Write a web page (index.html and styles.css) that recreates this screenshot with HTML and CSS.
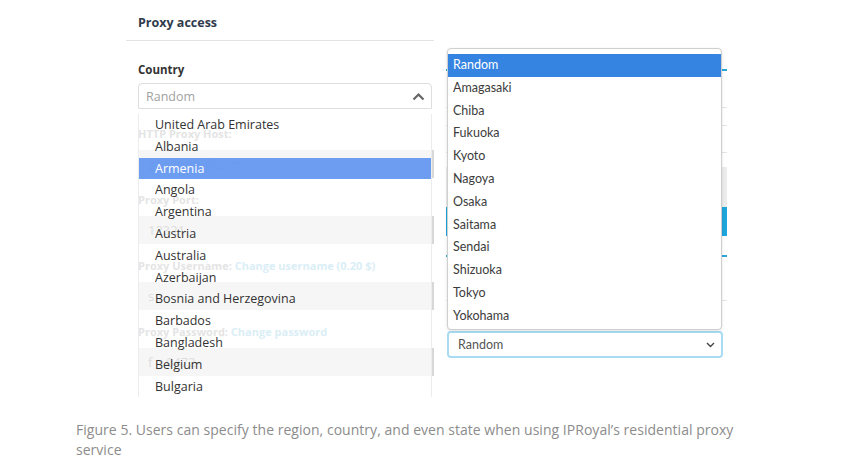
FILE: index.html
```html
<!DOCTYPE html>
<html>
<head>
    <meta charset="UTF-8">
    <title>Proxy access</title>
    <link rel="stylesheet" href="styles.css">
</head>
<body>
    <div class="figure">
        <div class="shot">
            <div class="panel-left">
                <div class="panel-head">Proxy access</div>
                <div class="field-label">Country</div>
                <div class="fake-select open">
                    <span>Random</span>
                    <svg width="13" height="9" viewBox="0 0 13 9"><path d="M1.5 7.5 L6.5 2.5 L11.5 7.5" fill="none" stroke="#666" stroke-width="2.2"/></svg>
                </div>
                <div class="under">
                    <div class="under-label">HTTP Proxy Host:</div>
                    <div class="under-input">geo.iproyal.com</div>
                    <div class="under-label">Proxy Port:</div>
                    <div class="under-input">12321</div>
                    <div class="under-label">Proxy Username: <span class="link">Change username (0.20 $)</span></div>
                    <div class="under-input">s</div>
                    <div class="under-label">Proxy Password: <span class="link">Change password</span></div>
                    <div class="under-input">f&nbsp;&nbsp;&nbsp;&nbsp;0472</div>

                    <ul class="country-list">
                        <li>United Arab Emirates</li>
                        <li>Albania</li>
                        <li class="active">Armenia</li>
                        <li>Angola</li>
                        <li>Argentina</li>
                        <li>Austria</li>
                        <li>Australia</li>
                        <li>Azerbaijan</li>
                        <li>Bosnia and Herzegovina</li>
                        <li>Barbados</li>
                        <li>Bangladesh</li>
                        <li>Belgium</li>
                        <li>Bulgaria</li>
                    </ul>
                </div>
            </div>

            <div class="panel-right">
                <div class="tab-line"></div>
                <div class="rule r1"></div>
                <div class="rule r2"></div>
                <div class="rule r3"></div>
                <div class="grey-block">
                    <div class="cyan-btn"></div>
                </div>
                <div class="tab-line t2"></div>
                <div class="rule r4"></div>
                <div class="city-select">
                    <span>Random</span>
                    <svg width="9" height="6" viewBox="0 0 9 6"><path d="M1 1 L4.5 4.5 L8 1" fill="none" stroke="#444" stroke-width="1.4"/></svg>
                </div>

                <ul class="city-list">
                    <li class="active">Random</li>
                    <li>Amagasaki</li>
                    <li>Chiba</li>
                    <li>Fukuoka</li>
                    <li>Kyoto</li>
                    <li>Nagoya</li>
                    <li>Osaka</li>
                    <li>Saitama</li>
                    <li>Sendai</li>
                    <li>Shizuoka</li>
                    <li>Tokyo</li>
                    <li>Yokohama</li>
                </ul>
            </div>
        </div>

        <p class="caption">Figure 5. Users can specify the region, country, and even state when using IPRoyal’s residential proxy service</p>
    </div>
</body>
</html>
```

FILE: styles.css
```css
body {
    margin: 0;
    background: #fff;
    font-family: "Open Sans", sans-serif;
}
.figure {
    width: 845px;
    height: 462px;
    overflow: hidden;
}
.shot {
    display: flex;
    gap: 12px;
    padding-left: 126px;
    height: 398px;
    overflow: hidden;
}

/* left screenshot */
.panel-left {
    width: 308px;
    flex-shrink: 0;
}
.panel-head {
    height: 41px;
    box-sizing: border-box;
    padding: 14px 0 0 12px;
    font-size: 12.5px;
    font-weight: 700;
    color: #2f3a4c;
    border-bottom: 1px solid #e3e3e3;
}
.field-label {
    margin: 21px 0 0 12px;
    font-size: 11.5px;
    font-weight: 700;
    color: #333;
    line-height: 16px;
}
.fake-select {
    margin: 5px 2px 0 12px;
    height: 26px;
    box-sizing: border-box;
    border: 1px solid #dedede;
    border-radius: 4px 4px 0 0;
    display: flex;
    align-items: center;
    justify-content: space-between;
    padding: 0 6px 0 7px;
    font-size: 12.5px;
    color: #a2a2a2;
}
.under {
    position: relative;
    margin: 0 0 0 12px;
    padding-top: 17px;
}
.under-label {
    font-size: 11px;
    font-weight: 700;
    color: #d8d8d8;
    line-height: 16px;
    height: 16px;
}
.link {
    color: #cbe7f2;
}
.under-input {
    height: 28px;
    margin: 8px 0 14px;
    background: #f3f3f3;
    border-right: 3px solid #d8d8d8;
    font-size: 13px;
    line-height: 28px;
    padding-left: 10px;
    color: #d0d0d0;
}
.country-list {
    position: absolute;
    top: 5px;
    left: 0;
    right: 2px;
    margin: 0;
    padding: 0;
    list-style: none;
    background: rgba(255, 255, 255, 0.3);
    border-left: 1px solid #ececec;
    border-right: 1px solid #ececec;
}
.country-list li {
    height: 21.8px;
    line-height: 21.8px;
    padding-left: 16px;
    font-size: 12.5px;
    color: #333;
}
.country-list li.active {
    background: rgba(90, 145, 240, 0.88);
    color: #fff;
}

/* right screenshot */
.panel-right {
    position: relative;
    width: 281px;
    flex-shrink: 0;
}
.tab-line {
    position: absolute;
    top: 69px;
    left: 0;
    right: 0;
    height: 2px;
    background: #2aa6d8;
}
.tab-line.t2 {
    top: 255px;
}
.rule {
    position: absolute;
    left: 0;
    right: 0;
    height: 1px;
    background: #e4e4e4;
}
.r1 { top: 107px; }
.r2 { top: 125px; }
.r3 { top: 152px; }
.r4 { top: 300px; }
.grey-block {
    position: absolute;
    top: 167px;
    left: 0;
    right: 0;
    height: 69px;
    background: #ececec;
}
.cyan-btn {
    margin-top: 40px;
    height: 29px;
    background: #1ea6dc;
}
.city-select {
    position: absolute;
    top: 331px;
    left: 1px;
    width: 276px;
    height: 27px;
    box-sizing: border-box;
    border: 2px solid #a9dcf3;
    border-radius: 4px;
    background: #fff;
    display: flex;
    align-items: center;
    justify-content: space-between;
    padding: 0 6px 0 9px;
    font-family: Lato, sans-serif;
    font-size: 12.5px;
    color: #555;
}
.city-list {
    position: absolute;
    top: 48px;
    left: 1px;
    width: 275px;
    height: 282px;
    box-sizing: border-box;
    margin: 0;
    padding: 5px 0 0;
    list-style: none;
    background: #fff;
    border: 1px solid #cfcfcf;
    border-radius: 4px;
    box-shadow: 0 1px 3px rgba(0, 0, 0, 0.12);
    font-family: Lato, sans-serif;
}
.city-list li {
    height: 22.8px;
    line-height: 22.8px;
    padding-left: 5px;
    font-size: 12.5px;
    color: #3c3c3c;
}
.city-list li.active {
    background: #3584e2;
    color: #fff;
}

.caption {
    margin: 22px 0 0 76px;
    width: 670px;
    font-size: 14px;
    line-height: 20px;
    color: #8c8c8c;
    letter-spacing: 0.03px;
}
```
